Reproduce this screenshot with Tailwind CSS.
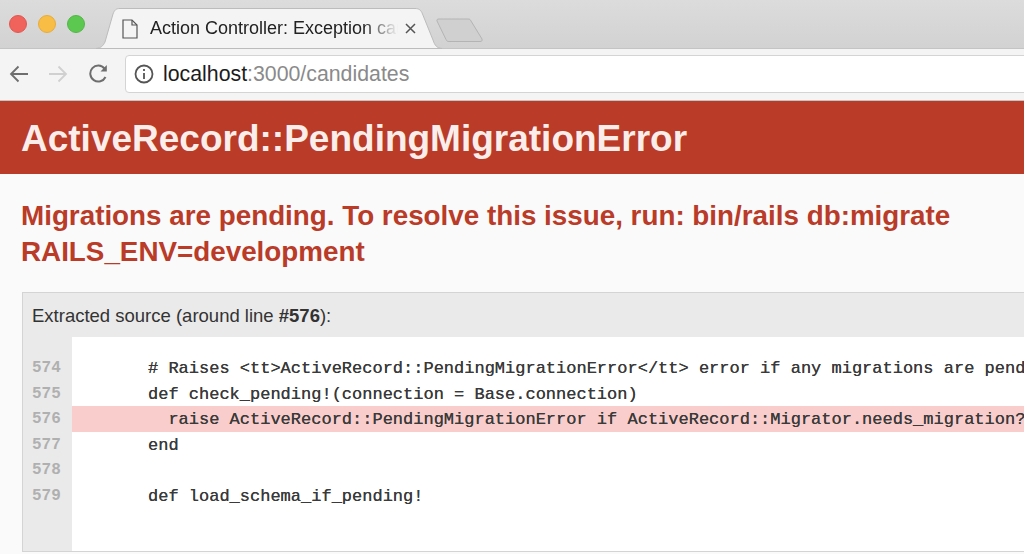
<!DOCTYPE html>
<html lang="en">
  <head>
    <meta charset="UTF-8" />
    <title>Action Controller: Exception caught</title>
    <script src="https://cdn.jsdelivr.net/npm/@tailwindcss/browser@4"></script>
  </head>
  <body class="w-[1024px] h-[554px] overflow-hidden bg-[#fafafa] font-['Liberation_Sans',sans-serif]">
    <!-- tab strip -->
    <div class="relative h-[48px] bg-gradient-to-b from-[#dcdcdc] to-[#d2d2d2] flex items-center">
      <svg class="absolute left-0 top-0" width="1024" height="49" viewBox="0 0 1024 49">
        <line x1="0" y1="48.500" x2="1024" y2="48.500" stroke="#c4c4c4" />
        <path d="M96 48.500 C101 48 103 46 105 42 L113 14 C114.500 10 116 8.500 120 8.500 L415 8.500 C419 8.500 421 10 422.500 14 L433 40 C435 46 437 48 442 48.500 Z" fill="#f4f4f4" stroke="#bcbcbc" stroke-width="1" />
        <path d="M437 21 C436.500 19.500 437.500 19 439 19 L468 19 C469.500 19 470.500 19.500 471 21 L482 39 C482.500 41 481.500 41.500 480 41.500 L449 41.500 C447.500 41.500 446.500 41 446 39.500 Z" fill="#d0d0d0" stroke="#b4b4b4" stroke-width="1" />
      </svg>
      <div class="relative flex items-center gap-[11px] pl-[9px] pb-[1px]">
        <span class="w-[18px] h-[18px] rounded-full bg-[#f0625c] border border-[#e25650]"></span>
        <span class="w-[18px] h-[18px] rounded-full bg-[#f8bd44] border border-[#e8ac38]"></span>
        <span class="w-[18px] h-[18px] rounded-full bg-[#5dc84f] border border-[#50b844]"></span>
      </div>
      <svg class="relative ml-[37px] mt-[9px]" width="16" height="20" viewBox="0 0 16 20" fill="none" stroke="#555555" stroke-width="1.200">
        <path d="M1 1 H10 L15 6 V19 H1 Z" />
        <path d="M10 1 V6 H15" />
      </svg>
      <div class="relative ml-[12px] mt-[8px] w-[248px] overflow-hidden whitespace-nowrap text-[18px] text-[#222222] [mask-image:linear-gradient(to_right,black_86%,transparent_100%)]">Action Controller: Exception caught</div>
      <svg class="relative ml-[7px] mt-[8px]" width="11" height="11" viewBox="0 0 11 11" stroke="#555555" stroke-width="1.500">
        <path d="M1 1 L10 10 M10 1 L1 10" />
      </svg>
    </div>

    <!-- toolbar -->
    <div class="h-[53px] bg-[#f4f4f4] border-b border-[#c4c4c4] flex items-center pl-[9px]">
      <svg width="20" height="18" viewBox="0 0 20 18" fill="none" stroke="#6e6e6e" stroke-width="1.800">
        <path d="M19 9 H2 M9.500 1.500 L2 9 L9.500 16.500" />
      </svg>
      <svg class="ml-[19px]" width="20" height="18" viewBox="0 0 20 18" fill="none" stroke="#d0d0d0" stroke-width="1.800">
        <path d="M1 9 H18 M10.500 1.500 L18 9 L10.500 16.500" />
      </svg>
      <svg class="ml-[21px]" width="20" height="20" viewBox="0 0 20 20" fill="none" stroke="#6e6e6e" stroke-width="2">
        <path d="M16.500 13 A8 8 0 1 1 15.500 4.500" />
        <path d="M17.800 1 V7.500 H11.500 Z" fill="#6e6e6e" stroke="none" />
      </svg>
      <div class="ml-[16px] h-[38px] flex-1 -mr-[8px] bg-white border border-[#d4d4d4] rounded-[4px] flex items-center pl-[8px]">
        <svg width="20" height="20" viewBox="0 0 20 20" fill="none" stroke="#555555" stroke-width="1.800">
          <circle cx="10" cy="10" r="8.500" />
          <path d="M10 9 V15 M10 5 V7" />
        </svg>
        <div class="ml-[9px] pt-[1px] text-[21.300px] text-[#8a8a8a] whitespace-nowrap"><span class="text-[#1c1c1c]">localhost</span>:3000/candidates</div>
      </div>
    </div>

    <!-- error header -->
    <div class="h-[73px] bg-[#b93b28] flex items-center pl-[21px] pt-[2px]">
      <h1 class="text-[37px] font-bold text-[#fbeeea] whitespace-nowrap">ActiveRecord::PendingMigrationError</h1>
    </div>

    <!-- message -->
    <h2 class="mt-[24px] pl-[21px] text-[27.800px] leading-[35.500px] font-bold text-[#b93b28] whitespace-nowrap">Migrations are pending. To resolve this issue, run: bin/rails db:migrate<br />RAILS_ENV=development</h2>

    <!-- source box -->
    <div class="mt-[23px] ml-[22px] -mr-[20px] h-[260px] border border-[#d4d4d4] bg-[#eaeaea] flex flex-col">
      <div class="h-[44px] shrink-0 flex items-center pl-[9px] pt-[1px] text-[18.500px] text-[#333333] whitespace-nowrap">
        <span>Extracted source (around line <b>#576</b>):</span>
      </div>
      <div class="flex-1 flex font-['Liberation_Mono',monospace] text-[17px] leading-[25.500px] overflow-hidden">
        <div class="w-[49px] shrink-0 pt-[19px] pl-[9px] text-[16px] font-bold text-[#b0b0b0]">
          <div>574</div>
          <div>575</div>
          <div>576</div>
          <div>577</div>
          <div>578</div>
          <div>579</div>
        </div>
        <div class="flex-1 min-w-0 bg-white pt-[18px] text-[#3a3a3a] [text-shadow:0_0_0.300px_#3a3a3a]">
          <div class="h-[25.500px] pt-[1px] pl-[76px] whitespace-pre"># Raises &lt;tt&gt;ActiveRecord::PendingMigrationError&lt;/tt&gt; error if any migrations are pending.</div>
          <div class="h-[25.500px] pt-[1px] pl-[76px] whitespace-pre">def check_pending!(connection = Base.connection)</div>
          <div class="h-[25.500px] pt-[1px] pl-[76px] whitespace-pre bg-[#f8cdcb]">  raise ActiveRecord::PendingMigrationError if ActiveRecord::Migrator.needs_migration?</div>
          <div class="h-[25.500px] pt-[1px] pl-[76px] whitespace-pre">end</div>
          <div class="h-[25.500px]"></div>
          <div class="h-[25.500px] pt-[1px] pl-[76px] whitespace-pre">def load_schema_if_pending!</div>
        </div>
      </div>
    </div>
  </body>
</html>
